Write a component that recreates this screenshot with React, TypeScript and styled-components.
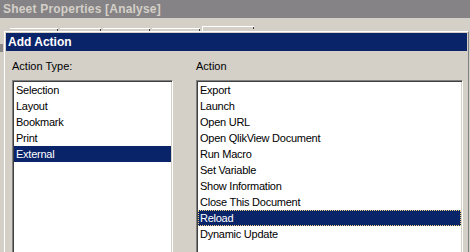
import React from 'react'
import styled, { createGlobalStyle } from 'styled-components'

const GlobalStyle = createGlobalStyle`
  html, body {
    margin: 0;
    padding: 0;
    background: #d4d0c8;
  }
`

const Screen = styled.div`
  width: 470px;
  height: 252px;
  overflow: hidden;
  background: #d4d0c8;
  font-family: 'Liberation Sans', Arial, sans-serif;
  font-size: 11px;
  color: #000;
`

const WindowTitle = styled.div`
  height: 18px;
  line-height: 18px;
  padding-left: 3px;
  background: #868386;
  color: #d4d0c8;
  font-weight: bold;
  font-size: 12px;
  letter-spacing: 0.2px;
  white-space: nowrap;
`

const TabStrip = styled.div`
  height: 13px;
  display: flex;
  align-items: flex-end;
  padding-left: 10px;
`

const Tab = styled.div<{ w: number; selected?: boolean }>`
  position: relative;
  width: ${({ w }) => w}px;
  height: ${({ selected }) => (selected ? 5 : 3)}px;
  margin-right: ${({ selected }) => (selected ? 0 : 2)}px;
  border-top: 1px solid #fff;
  border-left: ${({ selected }) => (selected ? '1px solid #fff' : 'none')};
  box-sizing: border-box;
  &::after {
    content: '';
    position: absolute;
    right: 0;
    top: 0;
    width: 1px;
    height: 2px;
    background: #404040;
  }
`

const Stage = styled.div`
  display: flex;
`

const Gutter = styled.div`
  width: 4px;
  flex: none;
`

const Notch = styled.div`
  width: 3px;
  height: 8px;
  margin-top: 13px;
  background: #8a8888;
`

const Dialog = styled.div`
  width: 465px;
  height: 240px;
  box-sizing: border-box;
  border-top: 1px solid #fff;
  border-left: 1px solid #fff;
  border-right: 1px solid #808080;
  padding: 1px 1px 0 1px;
`

const Caption = styled.div`
  height: 18px;
  line-height: 18px;
  padding-left: 2px;
  background: #0a246a;
  color: #fff;
  font-weight: bold;
  font-size: 12px;
`

const Body = styled.div`
  display: grid;
  grid-template-columns: 161px 267px;
  column-gap: 23px;
  padding: 9px 0 0 6px;
`

const Column = styled.div`
  display: flex;
  flex-direction: column;
`

const Label = styled.div`
  height: 13px;
  line-height: 13px;
  margin-bottom: 7px;
`

const ListBox = styled.div`
  height: 200px;
  background: #fff;
  border-style: solid;
  border-width: 1px;
  border-color: #808080 #fff #fff #808080;
  box-shadow: inset 1px 1px #404040, inset -1px -1px #d4d0c8;
  padding: 1px;
`

const Item = styled.div<{ selected?: boolean; focused?: boolean }>`
  height: 16px;
  line-height: 16px;
  padding-left: 2px;
  white-space: nowrap;
  letter-spacing: -0.25px;
  background: ${({ selected }) => (selected ? '#0a246a' : 'transparent')};
  color: ${({ selected }) => (selected ? '#fff' : '#000')};
  outline: ${({ focused }) => (focused ? '1px dotted #f2d27a' : 'none')};
  outline-offset: -1px;
`

const actionTypes = ['Selection', 'Layout', 'Bookmark', 'Print', 'External']
const actions = [
  'Export',
  'Launch',
  'Open URL',
  'Open QlikView Document',
  'Run Macro',
  'Set Variable',
  'Show Information',
  'Close This Document',
  'Reload',
  'Dynamic Update',
]

export default function App() {
  return (
    <>
      <GlobalStyle />
      <Screen>
        <WindowTitle>Sheet Properties [Analyse]</WindowTitle>
        <TabStrip>
          <Tab w={48} />
          <Tab w={41} />
          <Tab w={47} />
          <Tab w={48} />
          <Tab w={52} selected />
        </TabStrip>
        <Stage>
          <Gutter>
            <Notch />
          </Gutter>
          <Dialog>
            <Caption>Add Action</Caption>
            <Body>
              <Column>
                <Label>Action Type:</Label>
                <ListBox>
                  {actionTypes.map((t) => (
                    <Item key={t} selected={t === 'External'}>
                      {t}
                    </Item>
                  ))}
                </ListBox>
              </Column>
              <Column>
                <Label>Action</Label>
                <ListBox>
                  {actions.map((a) => (
                    <Item key={a} selected={a === 'Reload'} focused={a === 'Reload'}>
                      {a}
                    </Item>
                  ))}
                </ListBox>
              </Column>
            </Body>
          </Dialog>
        </Stage>
      </Screen>
    </>
  )
}
